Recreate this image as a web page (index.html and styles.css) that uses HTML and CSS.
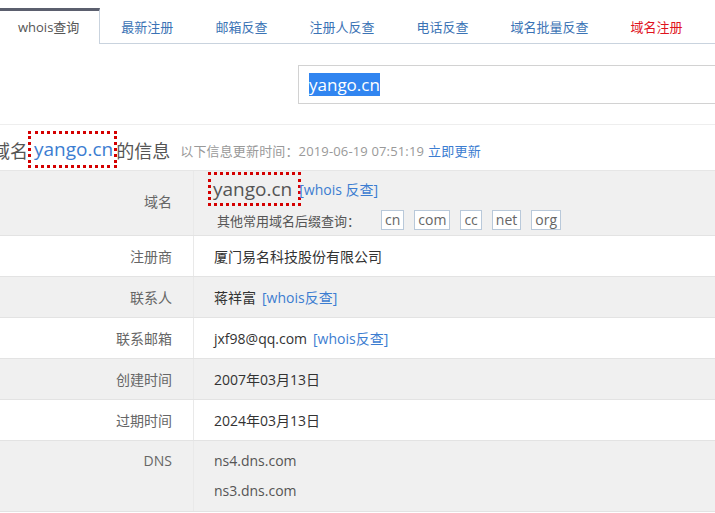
FILE: index.html
```html
<!DOCTYPE html>
<html lang="zh-CN">
<head>
<meta charset="utf-8">
<title>whois查询</title>
<link rel="stylesheet" href="styles.css">
</head>
<body>
<div class="tabs">
  <a class="tab active">whois查询</a>
  <a class="tab">最新注册</a>
  <a class="tab">邮箱反查</a>
  <a class="tab">注册人反查</a>
  <a class="tab">电话反查</a>
  <a class="tab">域名批量反查</a>
  <a class="tab red">域名注册</a>
</div>
<div class="search">
  <div class="input"><span class="sel">yango.cn</span></div>
</div>
<div class="title">
  <span class="t-main">域名<span class="mark t-domain">yango.cn</span>的信息</span>
  <span class="meta">以下信息更新时间：2019-06-19 07:51:19</span>
  <a class="link meta-link">立即更新</a>
</div>
<div class="table">
  <div class="row gray first">
    <div class="label">域名</div>
    <div class="value">
      <div class="dline"><span class="mark r-domain">yango.cn</span><a class="link wlink">[whois 反查]</a></div>
      <div class="suffix">其他常用域名后缀查询：<span class="sfx">cn</span><span class="sfx">com</span><span class="sfx">cc</span><span class="sfx">net</span><span class="sfx">org</span></div>
    </div>
  </div>
  <div class="row">
    <div class="label">注册商</div>
    <div class="value">厦门易名科技股份有限公司</div>
  </div>
  <div class="row gray">
    <div class="label">联系人</div>
    <div class="value">蒋祥富<a class="link after">[whois反查]</a></div>
  </div>
  <div class="row">
    <div class="label">联系邮箱</div>
    <div class="value">jxf98@qq.com<a class="link after">[whois反查]</a></div>
  </div>
  <div class="row gray">
    <div class="label">创建时间</div>
    <div class="value">2007年03月13日</div>
  </div>
  <div class="row">
    <div class="label">过期时间</div>
    <div class="value">2024年03月13日</div>
  </div>
  <div class="row gray dns">
    <div class="label">DNS</div>
    <div class="value">
      <div class="dnsl">ns4.dns.com</div>
      <div class="dnsl">ns3.dns.com</div>
    </div>
  </div>
</div>
</body>
</html>
```
FILE: styles.css
```css
html, body {
  margin: 0;
  padding: 0;
  background: #fff;
  overflow: hidden;
}
body {
  font-family: "Open Sans", "Noto Sans CJK SC", sans-serif;
  color: #333;
  width: 715px;
}
.tabs {
  display: flex;
  margin-top: 8px;
  height: 35px;
  border-bottom: 1px solid #c9d3de;
  white-space: nowrap;
}
.tab {
  padding: 0 21px;
  line-height: 32px;
  margin-top: 3px;
  font-size: 13px;
  color: #3b73b5;
}
.tab.active {
  margin-top: 0;
  margin-left: -3px;
  height: 33px;
  border-top: 3px solid #5b5f6e;
  border-right: 1px solid #c9d3de;
  background: #fff;
  color: #555;
  padding-left: 21px;
  padding-right: 20px;
}
.tab.red {
  color: #e0131e;
}
.search {
  padding: 21px 0 20px 298px;
  border-bottom: 1px solid #eeeeee;
}
.input {
  height: 37px;
  border: 1px solid #d2d2d2;
  border-right: none;
  display: flex;
  align-items: center;
  padding-left: 10px;
  font-size: 17px;
}
.sel {
  background: #3185f0;
  color: #fff;
  line-height: 23px;
  display: inline-block;
}
.title {
  display: flex;
  align-items: center;
  height: 41px;
  padding-top: 4px;
  margin-left: -8px;
  white-space: nowrap;
}
.t-main {
  font-size: 18px;
  color: #555;
  display: flex;
  align-items: center;
}
.mark {
  border: 3px dotted #d40000;
  display: inline-block;
}
.t-domain {
  color: #3c7dd1;
  font-size: 19px;
  line-height: 31px;
  padding: 0 1px 0 3px;
  margin-right: -1px;
}
.meta {
  font-size: 13px;
  letter-spacing: 0.15px;
  color: #999;
  margin-left: 10px;
  padding-top: 2px;
}
.link {
  color: #3c7dd1;
}
.meta-link {
  font-size: 13px;
  letter-spacing: 0.2px;
  margin-left: 4px;
  padding-top: 2px;
}
.table {
  border-top: 1px solid #e6e6e6;
}
.row {
  display: grid;
  grid-template-columns: 194px 1fr;
  border-bottom: 1px solid #e3e3e3;
  min-height: 40px;
  font-size: 14px;
}
.row.gray {
  background: #f0f0f0;
}
.label {
  text-align: right;
  padding-right: 21px;
  color: #666;
  display: flex;
  align-items: center;
  justify-content: flex-end;
  border-right: 1px solid #e9e9e9;
}
.value {
  padding-left: 20px;
  display: flex;
  align-items: center;
  color: #333;
}
.after {
  margin-left: 6px;
}
.row.first {
  min-height: 64px;
}
.row.first .label {
  padding-bottom: 4px;
}
.row.first .value {
  display: block;
  padding-top: 1px;
}
.dline {
  display: flex;
  align-items: center;
  height: 34px;
}
.r-domain {
  font-size: 19px;
  color: #555;
  line-height: 28px;
  margin-left: -6px;
  padding: 0 6px 0 2px;
}
.wlink {
  margin-left: -2px;
}
.suffix {
  display: flex;
  align-items: center;
  font-size: 13px;
  color: #555;
  padding-left: 3px;
  margin-top: 3px;
  height: 22px;
}
.sfx {
  font-size: 14px;
  color: #666;
  border: 1px solid #b9c9da;
  background: #fff;
  line-height: 18px;
  padding: 0 3px;
  margin-left: 10px;
}
.suffix .sfx:first-child {
  margin-left: 21px;
}
.row.dns .label {
  align-items: flex-start;
  padding-top: 5px;
  line-height: 30px;
}
.row.dns .value {
  display: block;
  padding-top: 5px;
  padding-bottom: 5px;
  color: #555;
}
.dnsl {
  line-height: 30px;
}
```
